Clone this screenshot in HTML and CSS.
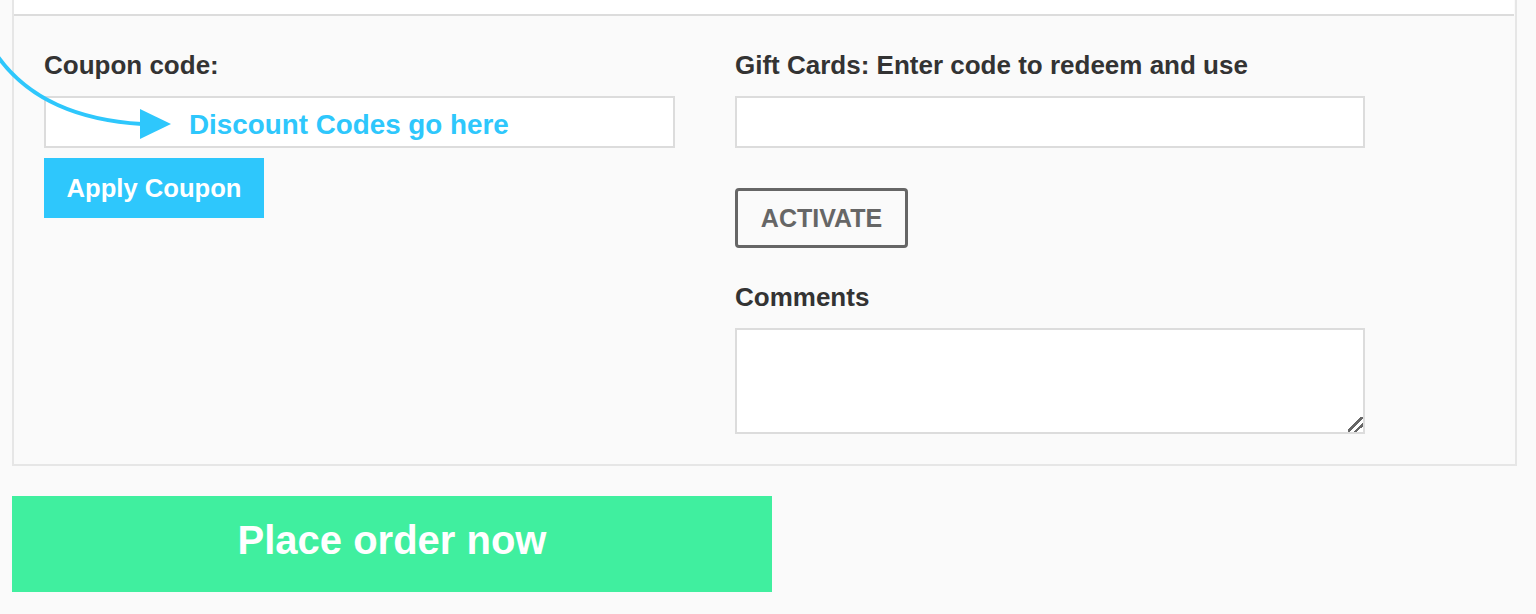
FILE: index.html
```html
<!DOCTYPE html>
<html lang="en">
<head>
<meta charset="utf-8">
<title>Checkout</title>
<link rel="stylesheet" href="styles.css">
</head>
<body>
<div class="page">
  <div class="panel">
    <div class="prev-row"></div>
    <div class="panel-body">
      <div class="col">
        <label class="field-label">Coupon code:</label>
        <div class="coupon-field">
          <input class="text-input" type="text">
          <svg class="annot-arrow" width="200" height="160" viewBox="0 0 200 160">
            <path d="M -4 54 Q 40 118 142 124" fill="none" stroke="#2ec7fc" stroke-width="4"/>
            <polygon points="140,109 171,124 140,139" fill="#2ec7fc"/>
          </svg>
          <span class="annot-text">Discount Codes go here</span>
        </div>
        <button class="btn-apply" type="button">Apply Coupon</button>
      </div>
      <div class="col">
        <label class="field-label">Gift Cards: Enter code to redeem and use</label>
        <input class="text-input text-input-right" type="text">
        <button class="btn-activate" type="button">ACTIVATE</button>
        <label class="field-label comments-label">Comments</label>
        <textarea class="comments"></textarea>
      </div>
    </div>
  </div>
  <button class="btn-place" type="button">Place order now</button>
</div>
</body>
</html>
```
FILE: styles.css
```css
body {
  margin: 0;
  background: #fafafa;
  font-family: "Liberation Sans", Arial, Helvetica, sans-serif;
  color: #333;
}

.page {
  padding-left: 12px;
}

.panel {
  width: 1501px;
  border: 2px solid #e6e6e6;
  border-top: none;
  background: #fafafa;
}

.prev-row {
  height: 14px;
  background: #fff;
  border-bottom: 2px solid #dcdcdc;
  margin-right: 1px;
}

.panel-body {
  display: grid;
  grid-template-columns: 631px 630px;
  column-gap: 60px;
  align-items: start;
  padding: 34px 0 30px 30px;
}

.col {
  display: flex;
  flex-direction: column;
  align-items: flex-start;
}

.field-label {
  font-size: 26px;
  line-height: 30px;
  font-weight: bold;
  margin-bottom: 16px;
  color: #333;
}

.coupon-field {
  position: relative;
}

.text-input {
  display: block;
  box-sizing: border-box;
  width: 631px;
  height: 52px;
  margin: 0;
  border: 2px solid #dcdcdc;
  background: #fff;
  outline: none;
}

.text-input-right {
  width: 630px;
}

.annot-arrow {
  position: absolute;
  left: -44px;
  top: -96px;
  overflow: visible;
  pointer-events: none;
}

.annot-text {
  position: absolute;
  left: 145px;
  top: 15px;
  font-size: 27.8px;
  line-height: 28px;
  font-weight: bold;
  color: #2ec7fc;
  white-space: nowrap;
  pointer-events: none;
}

.btn-apply {
  margin-top: 10px;
  width: 220px;
  height: 60px;
  padding: 0;
  border: none;
  background: #2ec7fc;
  color: #fff;
  font-family: inherit;
  font-size: 25.6px;
  font-weight: bold;
}

.btn-activate {
  margin-top: 40px;
  box-sizing: border-box;
  width: 173px;
  height: 60px;
  padding: 0;
  border: 3px solid #666;
  border-radius: 4px;
  background: transparent;
  color: #666;
  font-family: inherit;
  font-size: 25px;
  font-weight: bold;
}

.comments-label {
  margin-top: 34px;
}

.comments {
  display: block;
  box-sizing: border-box;
  width: 630px;
  height: 106px;
  margin: 0;
  border: 2px solid #dcdcdc;
  background: #fff;
}

.comments::-webkit-resizer {
  background: linear-gradient(135deg, transparent 0 42%, #666 42% 54%, transparent 54% 68%, #666 68% 80%, transparent 80%);
}

.btn-place {
  display: block;
  margin-top: 30px;
  width: 760px;
  height: 96px;
  padding: 0 0 8px;
  border: none;
  background: #40ef9f;
  color: #fff;
  font-family: inherit;
  font-size: 40px;
  font-weight: bold;
}
```
